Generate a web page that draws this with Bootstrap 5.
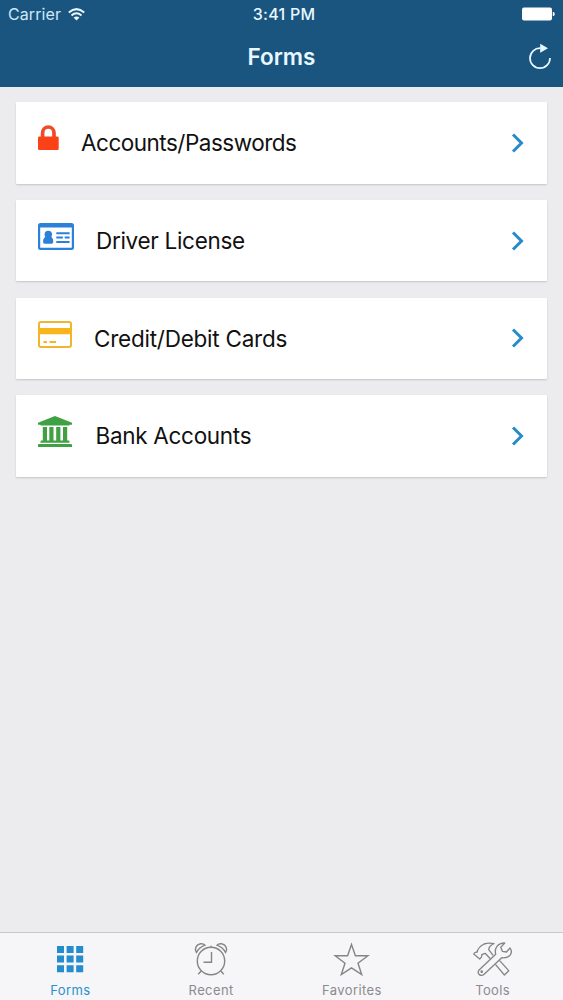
<!DOCTYPE html>
<html lang="en">
<head>
<meta charset="utf-8">
<meta name="viewport" content="width=device-width, initial-scale=1">
<title>Forms</title>
<link href="https://cdn.jsdelivr.net/npm/bootstrap@5.3.0/dist/css/bootstrap.min.css" rel="stylesheet">
<style>
body{font-family:Inter,"Liberation Sans",sans-serif;background:#ecebee;color:#111}
svg{display:block;flex:none}
.app-header{background:#1a5580;color:#e9f8ff;height:87px}
.status-bar{height:28px;padding:0 8px 0 8px;font-size:16px}
.status-bar>*{flex:1 1 0}
.carrier{color:#cfe9f8;letter-spacing:.1px}
.status-bar .gap-icon{gap:7px}
.clock-text{font-weight:500;letter-spacing:.25px;padding-left:5px}
.title-bar{height:58px;padding:0 11px 0 12px}
.title-bar h1{font-size:22.5px;font-weight:600;letter-spacing:0;padding-bottom:2px}
.form-list{padding:15px 16px 0;gap:16.3px}
.form-card{height:81.5px;border:0;border-radius:1px;padding:0 22px;box-shadow:0 1px 2px rgba(0,0,0,.17);color:#111}
.form-card .label-text{font-size:22.5px;letter-spacing:-.3px;margin-left:22px;line-height:1;padding-top:1px}
.form-card .label-tight{letter-spacing:-.5px}
.form-card .label-roomy{letter-spacing:-.24px}
.form-card .label-bank{margin-left:23.5px}
.form-card .chevron{margin-right:1px}
.form-icon{margin-top:-10px}
.form-icon.lower{margin-top:-8px}
.tab-bar{height:68px;background:#f6f5f8;border-top:1px solid #c9c8cb;color:#8b8b8e}
.tab-bar a{color:inherit;font-size:13px;line-height:16px;letter-spacing:.4px;padding-top:7px}
.tab-bar a.active{color:#2890cf}
.tab-bar svg{margin-bottom:4px}
</style>
</head>
<body>
<div class="d-flex flex-column vh-100 overflow-hidden">
<header class="app-header">
  <div class="status-bar d-flex align-items-center">
    <div class="gap-icon d-flex align-items-center"><span class="carrier">Carrier</span>
      <svg width="17" height="13" viewBox="0 0 17 13" fill="none" stroke="#e9f8ff" stroke-width="2"><path d="M.8 4.4Q8.5-2.2 16.2 4.4M3.5 7.4Q8.5 3.2 13.5 7.4"/><path d="M5.6 9.6Q8.5 7.4 11.4 9.6L8.5 12.6Z" fill="#e9f8ff" stroke="none"/></svg></div>
    <div class="clock-text text-center text-nowrap">3:41 PM</div>
    <div class="d-flex justify-content-end"><svg width="34" height="14" viewBox="0 0 34 14" fill="#fff"><rect x="1" y=".5" width="30" height="13" rx="2"/><path d="M31.800 4.800Q33.800 5.200 33.800 7T31.800 9.200Z"/></svg></div>
  </div>
  <div class="title-bar d-flex align-items-center">
    <span style="width:23px"></span>
    <h1 class="m-0 flex-fill text-center">Forms</h1>
    <svg width="24" height="28" viewBox="0 0 24 28" fill="none" stroke="#e9f8ff" stroke-width="1.7"><path d="M22 15A10 10 0 1 1 12.500 5.200"/><path d="M12.200.8V9.800L20 5.200Z" fill="#e9f8ff" stroke="none"/></svg>
  </div>
</header>
<main class="form-list d-flex flex-column flex-grow-1">
  <a href="#" class="form-card card flex-row align-items-center text-decoration-none">
    <svg class="form-icon" width="21" height="26" viewBox="0 0 21 26"><path d="M4.600 13V8a5.700 6 0 0 1 11.400 0v5" fill="none" stroke="#f04a2b" stroke-width="3.700"/><rect x="0" y="11.500" width="20.700" height="13.500" rx="1.300" fill="#fb4216"/></svg>
    <span class="label-text label-tight">Accounts/Passwords</span>
    <svg class="chevron ms-auto" width="13" height="20" viewBox="0 0 13 20" fill="none" stroke="#278bc9" stroke-width="3"><path d="M2 1.500 10.500 10 2 18.500"/></svg>
  </a>
  <a href="#" class="form-card card flex-row align-items-center text-decoration-none">
    <svg class="form-icon lower" width="36" height="27" viewBox="0 0 36 27" fill="#2b80da"><path fill-rule="evenodd" d="M2.500 0h31A2.500 2.500 0 0 1 36 2.500v22a2.500 2.500 0 0 1-2.500 2.500h-31A2.500 2.500 0 0 1 0 24.500v-22A2.500 2.500 0 0 1 2.500 0ZM2.200 4.600V24.200q0 .6.6.6H33.200q.6 0 .6-.6V4.600Z"/><circle cx="10.300" cy="11.500" r="3.700"/><path d="M7.500 13.500h5.600q2.200 2 2.200 5.300 0 2-1.800 2H6.800q-1.800 0-1.800-2 0-3.300 2.500-5.300ZM18.300 9.200h13.300v2H18.300ZM18.300 13.500h6.600v2h-6.600ZM26.700 13.500h4.900v2h-4.900ZM18.300 17.900h13.300v2H18.300Z"/></svg>
    <span class="label-text">Driver License</span>
    <svg class="chevron ms-auto" width="13" height="20" viewBox="0 0 13 20" fill="none" stroke="#278bc9" stroke-width="3"><path d="M2 1.500 10.500 10 2 18.500"/></svg>
  </a>
  <a href="#" class="form-card card flex-row align-items-center text-decoration-none">
    <svg class="form-icon lower" width="34" height="27" viewBox="0 0 34 27" fill="#fbb51c"><rect x="1" y="1" width="32" height="25" rx="2" fill="none" stroke="#efb52e" stroke-width="2"/><path d="M1 7h32v6.200H1ZM5.500 20h3.500v2H5.500ZM11.500 20h6.500v2h-6.500Z"/></svg>
    <span class="label-text label-roomy">Credit/Debit Cards</span>
    <svg class="chevron ms-auto" width="13" height="20" viewBox="0 0 13 20" fill="none" stroke="#278bc9" stroke-width="3"><path d="M2 1.500 10.500 10 2 18.500"/></svg>
  </a>
  <a href="#" class="form-card card flex-row align-items-center text-decoration-none">
    <svg class="form-icon" width="34" height="31" viewBox="0 0 34 31" fill="#40a144"><path d="M17 0 34 6.700V8.800H31.500V9.500H2.500V8.800H0V6.700ZM4.800 11H9V24.500H11.300V11H15.500V24.500H18.200V11H22.400V24.500H25V11H29.200V24.500H30.500Q31.500 24.500 31.500 25.500V26.800H2.500V25.500Q2.500 24.500 3.500 24.500H4.800ZM1 28H33Q34 28 34 29V31H0V29Q0 28 1 28Z"/></svg>
    <span class="label-text label-bank">Bank Accounts</span>
    <svg class="chevron ms-auto" width="13" height="20" viewBox="0 0 13 20" fill="none" stroke="#278bc9" stroke-width="3"><path d="M2 1.500 10.500 10 2 18.500"/></svg>
  </a>
</main>
<nav class="tab-bar d-flex">
  <a href="#" class="active col-3 d-flex flex-column align-items-center text-decoration-none">
    <svg width="40" height="38" viewBox="0 0 40 38" fill="#258dcd"><path d="M7 6h7v7H7ZM16.600 6h7v7h-7ZM26.200 6h7v7h-7ZM7 15.600h7v7H7ZM16.600 15.600h7v7h-7ZM26.200 15.600h7v7h-7ZM7 25.200h7v7H7ZM16.600 25.200h7v7h-7ZM26.200 25.200h7v7h-7Z"/></svg>Forms</a>
  <a href="#" class="col-3 d-flex flex-column align-items-center text-decoration-none">
    <svg width="40" height="38" viewBox="0 0 40 38" fill="none" stroke="#858588" stroke-width="1.400"><circle cx="20" cy="21" r="13.700"/><path d="M20.500 12V22.200H12.500M20 7.300V5.800M10.200 31 7.200 34.300M29.800 31 32.800 34.300M5.500 12.500C3 9 5 4.500 9.500 3.800Q12.500 3.500 14 5.200Q8 7.500 5.500 12.500ZM34.500 12.500C37 9 35 4.500 30.500 3.800Q27.500 3.500 26 5.200Q32 7.500 34.500 12.500Z"/></svg>Recent</a>
  <a href="#" class="col-3 d-flex flex-column align-items-center text-decoration-none">
    <svg width="40" height="38" viewBox="0 0 40 38" fill="none" stroke="#858588" stroke-width="1.400"><path d="M19.500 4.500 23.400 15.800H35.900L26 23.300 29.700 34.500 19.500 27.800 9.300 34.500 13 23.300 3.200 15.800H15.600Z"/></svg>Favorites</a>
  <a href="#" class="col-3 d-flex flex-column align-items-center text-decoration-none">
    <svg width="40" height="38" viewBox="67.800 45 120 114" fill="none" stroke="#858588" stroke-width="4" stroke-linejoin="round"><path d="M86 135 136 88C131 70 142 54 163 54L151 67 156 79 168 81 179 69C189 84 178 101 154 98L102 147C92 157 77 146 86 135Z"/><path d="M120 101 104 85 94 89Q96 95 88 102L70 87Q74 80 80 82 82 67 101 57 116 52 131 56 116 62 115 74L128 91M135 118 162 150 175 137 147 106"/><circle cx="94" cy="140" r="2"/></svg>Tools</a>
</nav>
</div>
<script src="https://cdn.jsdelivr.net/npm/bootstrap@5.3.0/dist/js/bootstrap.bundle.min.js"></script>
</body>
</html>
